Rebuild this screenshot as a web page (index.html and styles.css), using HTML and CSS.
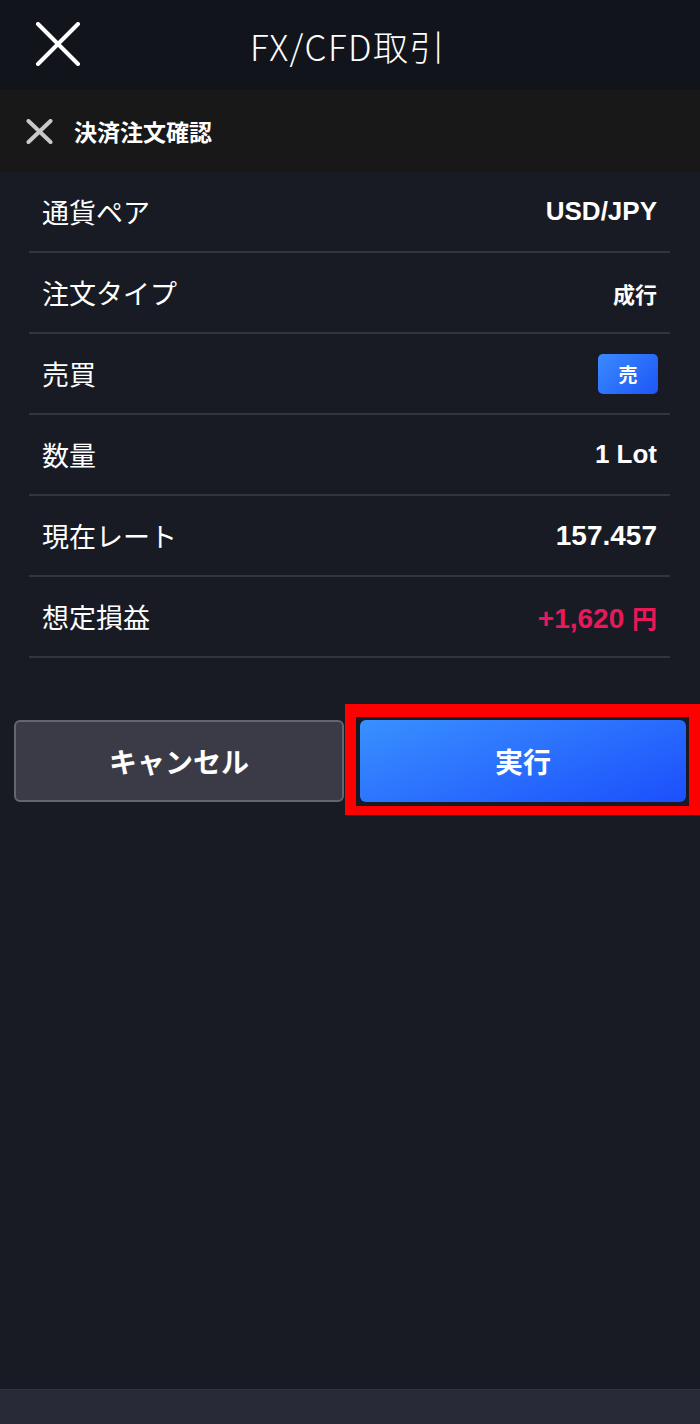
FILE: index.html
```html
<!DOCTYPE html>
<html lang="ja">
<head>
    <meta charset="UTF-8">
    <title>FX/CFD取引</title>
    <link rel="stylesheet" href="styles.css">
</head>
<body>
    <div class="header">
        <svg class="close" width="46" height="44" viewBox="0 0 46 44">
            <path d="M3 2 L43 42 M43 2 L3 42" stroke="#fff" stroke-width="4" stroke-linecap="round"/>
        </svg>
        <div class="title">FX/CFD取引</div>
    </div>
    <div class="subheader">
        <svg class="subclose" width="27" height="25" viewBox="0 0 27 25">
            <path d="M2.5 2 L24.5 23 M24.5 2 L2.5 23" stroke="#c8c8c8" stroke-width="4" stroke-linecap="round"/>
        </svg>
        <span class="subtitle">決済注文確認</span>
    </div>
    <div class="content">
        <ul class="list">
            <li><span class="label">通貨ペア</span><span class="value">USD/JPY</span></li>
            <li><span class="label">注文タイプ</span><span class="value small">成行</span></li>
            <li><span class="label">売買</span><span class="badge">売</span></li>
            <li><span class="label">数量</span><span class="value">1 Lot</span></li>
            <li><span class="label">現在レート</span><span class="value num">157.457</span></li>
            <li><span class="label">想定損益</span><span class="value num profit">+1,620 <span class="yen">円</span></span></li>
        </ul>
        <div class="buttons">
            <div class="btn cancel">キャンセル</div>
            <div class="btn exec">実行<div class="mark"></div></div>
        </div>
    </div>
    <div class="bottombar"></div>
</body>
</html>
```

FILE: styles.css
```css
* {
    box-sizing: border-box;
}

body, html {
    margin: 0;
    padding: 0;
    font-family: "Liberation Sans", "Noto Sans CJK JP", sans-serif;
    color: #fff;
}
body {
    display: flex;
    flex-direction: column;
    min-height: 100vh;
    background: #181b24;
}

.header {
    height: 90px;
    background: #12141c;
    position: relative;
    display: flex;
    align-items: center;
    justify-content: center;
}
.close {
    position: absolute;
    left: 35px;
    top: 22px;
}
.title {
    font-family: "Noto Sans CJK JP", sans-serif;
    font-size: 35px;
    font-weight: 300;
    letter-spacing: 1.5px;
    margin-left: -4px;
}

.subheader {
    height: 82px;
    background: #181818;
    display: flex;
    align-items: center;
    padding-left: 26px;
}
.subtitle {
    font-family: "Noto Sans CJK JP", sans-serif;
    font-size: 23px;
    font-weight: bold;
    margin-left: 21px;
}

.content {
    flex-grow: 1;
}
.list {
    list-style: none;
    margin: 0;
    padding: 0 30px 0 29px;
}
.list li {
    height: 81px;
    border-bottom: 2px solid #33353d;
    display: flex;
    align-items: center;
    justify-content: space-between;
    padding: 0 13px;
}
.label {
    font-family: "Noto Sans CJK JP", sans-serif;
    font-size: 27px;
    font-weight: 400;
}
.value {
    font-size: 26px;
    font-weight: bold;
}
.value.num {
    font-size: 28px;
}
.value.small {
    font-family: "Noto Sans CJK JP", sans-serif;
    font-size: 22px;
}
.profit {
    color: #e8195a;
}
.yen {
    font-family: "Noto Sans CJK JP", sans-serif;
    font-size: 25px;
}
.badge {
    width: 60px;
    height: 40px;
    border-radius: 5px;
    background: linear-gradient(135deg, #3a8bff, #1d55f5);
    display: flex;
    align-items: center;
    justify-content: center;
    font-family: "Noto Sans CJK JP", sans-serif;
    font-size: 19px;
    font-weight: bold;
    margin-right: -1px;
}

.buttons {
    display: flex;
    gap: 16px;
    padding: 62px 14px 0;
}
.btn {
    flex: 1;
    height: 82px;
    border-radius: 6px;
    display: flex;
    align-items: center;
    justify-content: center;
    font-family: "Noto Sans CJK JP", sans-serif;
    font-size: 28px;
    font-weight: bold;
}
.cancel {
    background: #3a3b46;
    border: 2px solid #64656d;
}
.exec {
    position: relative;
    background: linear-gradient(160deg, #3990ff, #1c4ffc);
}
.mark {
    position: absolute;
    left: -15px;
    top: -16px;
    right: -14px;
    bottom: -13px;
    border-style: solid;
    border-color: #ff0000;
    border-width: 13px 11px 9px 11px;
}

.bottombar {
    height: 35px;
    background: #282a37;
    border-top: 1px solid #2f313d;
}
```
